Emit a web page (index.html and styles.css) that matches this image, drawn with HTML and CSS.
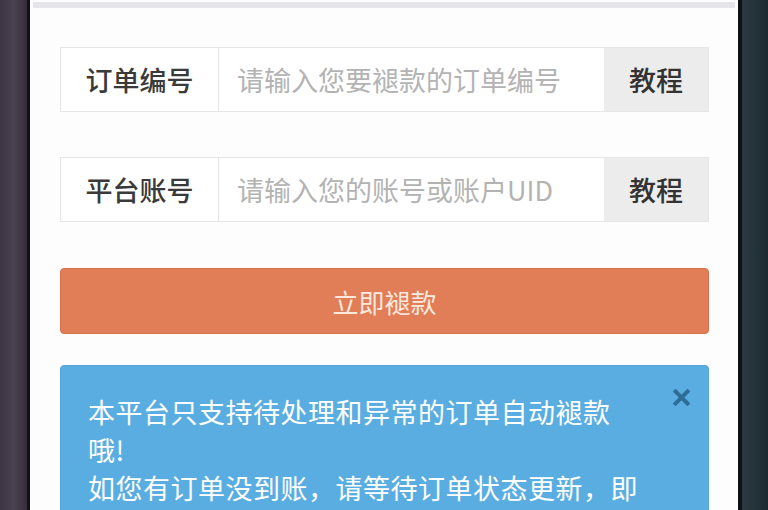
FILE: index.html
```html
<!DOCTYPE html>
<html lang="zh-CN">
<head>
<meta charset="utf-8">
<title>自动褪款</title>
<link rel="stylesheet" href="styles.css">
</head>
<body>
<div class="frame-left"></div>
<div class="edge-left"></div>
<main class="screen">
  <div class="topbar"></div>
  <div class="content">
    <div class="input-group">
      <span class="addon-label">订单编号</span>
      <span class="field placeholder">请输入您要褪款的订单编号</span>
      <span class="addon-btn">教程</span>
    </div>
    <div class="input-group second">
      <span class="addon-label">平台账号</span>
      <span class="field placeholder">请输入您的账号或账户UID</span>
      <span class="addon-btn">教程</span>
    </div>
    <button class="submit">立即褪款</button>
    <div class="alert">
      <span class="close">
        <svg width="17" height="17" viewBox="0 0 17 17"><path d="M2.5 2.5 L14.5 14.5 M14.5 2.5 L2.5 14.5" stroke="#2f6d99" stroke-width="4" stroke-linecap="square"/></svg>
      </span>
      <p class="alert-text">本平台只支持待处理和异常的订单自动褪款哦!<br>如您有订单没到账，请等待订单状态更新，即可自动褪款。</p>
    </div>
  </div>
</main>
<div class="edge-right"></div>
<div class="frame-right"></div>
</body>
</html>
```
FILE: styles.css
```css
html, body {
  margin: 0;
  padding: 0;
}
body {
  display: flex;
  width: 768px;
  height: 510px;
  overflow: hidden;
  background: #24323a;
  font-family: "Noto Sans CJK SC", "Noto Sans", sans-serif;
}
.frame-left {
  width: 27px;
  flex: none;
  background: linear-gradient(90deg, #3d3444 0%, #4a4250 50%, #362e3c 100%);
}
.edge-left {
  width: 3px;
  flex: none;
  background: #141116;
}
.screen {
  width: 708px;
  flex: none;
  background: #fdfdfd;
}
.edge-right {
  width: 4px;
  flex: none;
  background: #0f1214;
}
.frame-right {
  flex: 1;
  background: linear-gradient(90deg, #2c3a40 0%, #22323a 60%, #1c2a30 100%);
}
.topbar {
  height: 6px;
  margin: 2px 3px 0 3px;
  background: #e5e5ea;
}
.content {
  padding: 39px 29px 0 30px;
}
.input-group {
  display: flex;
  height: 65px;
  box-sizing: border-box;
  border: 1px solid #e6e6e6;
  font-size: 27px;
}
.input-group.second {
  margin-top: 45px;
}
.addon-label {
  width: 157px;
  flex: none;
  display: flex;
  align-items: center;
  justify-content: center;
  color: #3a3a3a;
  font-weight: 500;
  background: #fff;
  border-right: 1px solid #e6e6e6;
}
.field {
  flex: 1;
  display: flex;
  align-items: center;
  padding-left: 18px;
  background: #fff;
}
.placeholder {
  color: #b3b3b3;
}
.addon-btn {
  width: 104px;
  flex: none;
  display: flex;
  align-items: center;
  justify-content: center;
  background: #ececec;
  color: #333;
  font-weight: 500;
}
.submit {
  display: block;
  width: 100%;
  height: 66px;
  margin-top: 46px;
  border: 1px solid #d9714b;
  border-radius: 4px;
  background: #e27e57;
  color: #fbe8df;
  font-family: inherit;
  font-size: 26px;
  padding: 0;
}
.alert {
  position: relative;
  margin-top: 31px;
  height: 200px;
  box-sizing: border-box;
  padding: 27px 69px 0 27px;
  background: #5aade1;
  border: 1px solid #54a5d9;
  border-radius: 4px;
  color: #fff;
}
.alert-text {
  margin: 0;
  font-size: 27px;
  letter-spacing: 0.5px;
  line-height: 38px;
}
.close {
  position: absolute;
  top: 23px;
  right: 18px;
  width: 17px;
  height: 17px;
  display: flex;
}
```
